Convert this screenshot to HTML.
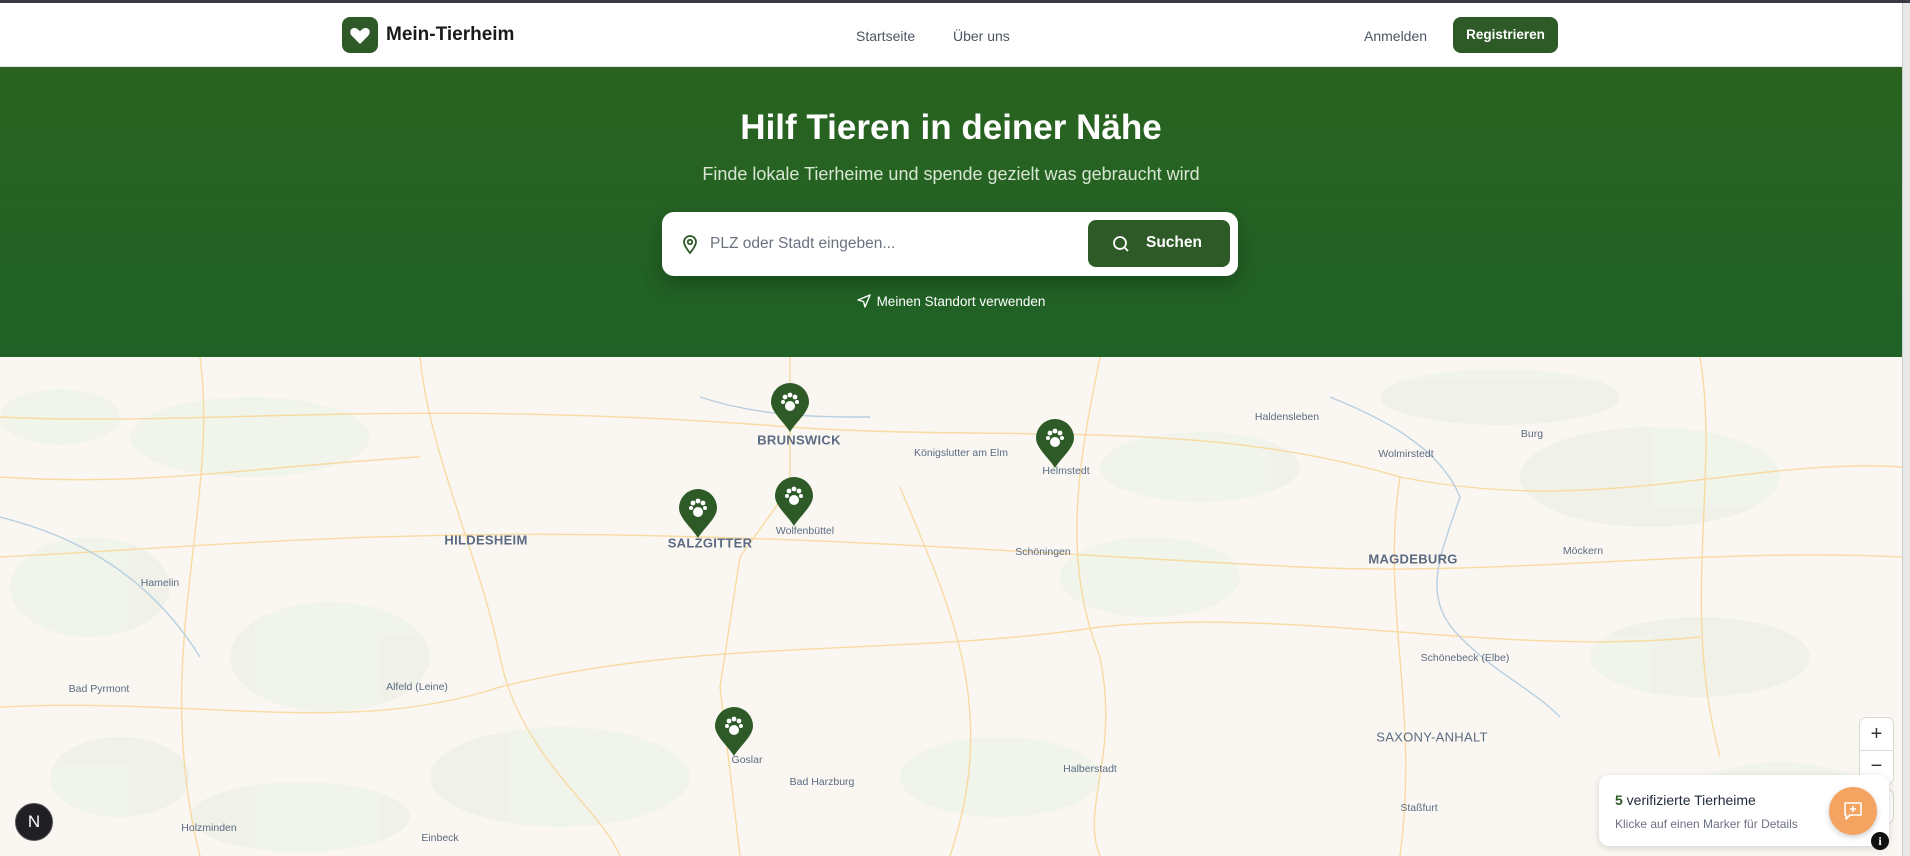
<!DOCTYPE html>
<html><head><meta charset="utf-8"><style>
*{margin:0;padding:0;box-sizing:border-box}
body{width:1910px;height:856px;overflow:hidden;font-family:"Liberation Sans","DejaVu Sans",sans-serif;background:#faf7f2;position:relative}
.topbar{position:absolute;left:0;top:0;width:1910px;height:3px;background:#3a3a44}
.header{position:absolute;left:0;top:3px;width:1902px;height:64px;background:#fff;border-bottom:1px solid #e5e7eb}
.logo{position:absolute;left:342px;top:14px;width:36px;height:36px;background:#2d5a27;border-radius:8px}
.brand{position:absolute;left:386px;top:21px;font-size:19px;font-weight:bold;color:#1a1a1a}
.nav{position:absolute;top:25px;font-size:14px;color:#4b5563}
.reg{position:absolute;left:1453px;top:14px;width:105px;height:36px;background:#2d5a27;border-radius:8px;color:#fff;font-size:13.5px;font-weight:bold;text-align:center;line-height:36px}
.hero{position:absolute;left:0;top:67px;width:1902px;height:290px;background:linear-gradient(180deg,#2a6320,#1f6126)}
.title{position:absolute;left:0;width:1902px;top:41px;text-align:center;color:#fff;font-size:35px;font-weight:bold}
.sub{position:absolute;left:0;width:1902px;top:97px;text-align:center;color:#d8e6d4;font-size:18px}
.search{position:absolute;left:662px;top:145px;width:576px;height:64px;background:#fff;border-radius:12px;box-shadow:0 8px 20px rgba(0,0,0,.25)}
.ph{position:absolute;left:48px;top:23px;color:#6b7280;font-size:15.5px}
.btn{position:absolute;left:426px;top:8px;width:142px;height:47px;background:#2d5a27;border-radius:8px;color:#fff;font-size:15.5px;font-weight:bold}
.loc{position:absolute;left:0;width:1902px;top:227px;text-align:center;color:#fff;font-size:13.5px}
.map{position:absolute;left:0;top:357px;width:1902px;height:499px;background:#faf7f2;overflow:hidden}
.scroll{position:absolute;left:1902px;top:3px;width:8px;height:853px;background:#e8e8e8;border-left:1px solid #ccc}
.lb{position:absolute;color:#5b6b82;font-size:10.5px;white-space:nowrap;transform:translate(-50%,-50%)}
.cap{font-weight:bold;font-size:13px;letter-spacing:.3px}
.mk{position:absolute;width:40px;height:50px}
.zoom{position:absolute;left:1860px;top:718px;width:33px;height:66px;background:#fff;border-radius:6px;box-shadow:0 0 0 1px rgba(0,0,0,.12);font-size:20px;text-align:center;color:#333}
.panel{position:absolute;left:1599px;top:775px;width:290px;height:71px;background:#fff;border-radius:10px;box-shadow:0 2px 8px rgba(0,0,0,.15)}
</style></head><body>
<div class="topbar"></div>
<div class="header">
 <div class="logo"><svg width="36" height="36" viewBox="0 0 36 36"><path d="M18 27 L10 19 C7 16 8 11 12.5 11 C15 11 17 13 18 14.5 C19 13 21 11 23.5 11 C28 11 29 16 26 19 Z" fill="#fff"/></svg></div>
 <div class="brand">Mein-Tierheim</div>
 <div class="nav" style="left:856px">Startseite</div>
 <div class="nav" style="left:953px">Über uns</div>
 <div class="nav" style="left:1364px;color:#4b5563">Anmelden</div>
 <div class="reg">Registrieren</div>
</div>
<div class="hero">
 <div class="title">Hilf Tieren in deiner Nähe</div>
 <div class="sub">Finde lokale Tierheime und spende gezielt was gebraucht wird</div>
 <div class="search">
  <svg style="position:absolute;left:20px;top:22px" width="16" height="20" viewBox="0 0 16 20"><path d="M8 19 C8 19 2 12 2 8 A6 6 0 0 1 14 8 C14 12 8 19 8 19Z" fill="none" stroke="#2d5a27" stroke-width="1.8"/><circle cx="8" cy="8" r="2.2" fill="none" stroke="#2d5a27" stroke-width="1.8"/></svg>
  <div class="ph">PLZ oder Stadt eingeben...</div>
  <div class="btn"><svg style="position:absolute;left:24px;top:15px" width="18" height="18" viewBox="0 0 18 18"><circle cx="8" cy="8" r="6" fill="none" stroke="#fff" stroke-width="1.8"/><path d="M12.5 12.5 L16 16" stroke="#fff" stroke-width="1.8"/></svg><span style="position:absolute;left:58px;top:14px">Suchen</span></div>
 </div>
 <div class="loc"><svg width="14" height="14" viewBox="0 0 14 14" style="vertical-align:-2px;margin-right:6px"><path d="M13 1 L1 6 L6.5 7.5 L8 13 Z" fill="none" stroke="#fff" stroke-width="1.4" stroke-linejoin="round"/></svg>Meinen Standort verwenden</div>
</div>
<div class="map">
<svg width="1902" height="499" style="position:absolute;left:0;top:0">
 <g fill="#eef2e7" opacity=".8">
  <ellipse cx="250" cy="80" rx="120" ry="40"/><ellipse cx="90" cy="230" rx="80" ry="50"/><ellipse cx="330" cy="300" rx="100" ry="55"/>
  <ellipse cx="1200" cy="110" rx="100" ry="35"/><ellipse cx="1150" cy="220" rx="90" ry="40"/><ellipse cx="1650" cy="120" rx="130" ry="50"/>
  <ellipse cx="1700" cy="300" rx="110" ry="40"/><ellipse cx="560" cy="420" rx="130" ry="50"/><ellipse cx="300" cy="460" rx="110" ry="35"/>
  <ellipse cx="1500" cy="40" rx="120" ry="28"/><ellipse cx="1000" cy="420" rx="100" ry="40"/><ellipse cx="1780" cy="440" rx="90" ry="35"/>
  <ellipse cx="120" cy="420" rx="70" ry="40"/><ellipse cx="60" cy="60" rx="60" ry="28"/>
 </g>
 <g fill="none" stroke="#f8d79a" stroke-width="1.4" opacity=".9">
  <path d="M0 60 C200 70 400 40 790 70 C1000 85 1200 60 1400 120 C1600 160 1750 100 1902 110"/>
  <path d="M790 0 L790 130 L740 200 L720 330 L740 499"/>
  <path d="M0 200 C200 190 400 170 700 180 C900 185 1100 200 1300 210 C1500 220 1700 190 1902 200"/>
  <path d="M420 0 C430 100 480 200 500 300 C520 400 600 450 620 499"/>
  <path d="M1100 0 C1080 100 1060 200 1100 300 C1120 400 1080 450 1100 499"/>
  <path d="M0 350 C200 340 350 380 500 330 C700 280 900 300 1100 270 C1300 250 1500 300 1700 280 1902 290"/>
  <path d="M200 0 C220 150 150 300 200 499"/>
  <path d="M1400 120 C1380 250 1420 350 1400 499"/>
  <path d="M1700 0 C1720 120 1680 250 1720 400 1700 499"/>
  <path d="M0 120 C150 130 250 110 420 100"/>
  <path d="M900 130 C950 250 1000 350 950 499"/>
 </g>
 <g fill="none" stroke="#b8cfe0" stroke-width="1.4">
  <path d="M1330 40 C1380 60 1440 90 1460 140 C1440 200 1420 240 1460 280 C1500 320 1530 330 1560 360"/>
  <path d="M0 160 C80 180 150 220 200 300"/>
  <path d="M700 40 C760 60 820 60 870 60"/>
 </g>
</svg>
<div class="lb cap" style="left:799px;top:83px">BRUNSWICK</div>
<div class="lb" style="left:961px;top:96px">Königslutter am Elm</div>
<div class="lb" style="left:1066px;top:114px">Helmstedt</div>
<div class="lb cap" style="left:486px;top:183px">HILDESHEIM</div>
<div class="lb cap" style="left:710px;top:186px">SALZGITTER</div>
<div class="lb" style="left:805px;top:174px">Wolfenbüttel</div>
<div class="lb" style="left:1043px;top:195px">Schöningen</div>
<div class="lb cap" style="left:1413px;top:202px">MAGDEBURG</div>
<div class="lb" style="left:160px;top:226px">Hamelin</div>
<div class="lb" style="left:1287px;top:60px">Haldensleben</div>
<div class="lb" style="left:1532px;top:77px">Burg</div>
<div class="lb" style="left:1406px;top:97px">Wolmirstedt</div>
<div class="lb" style="left:1583px;top:194px">Möckern</div>
<div class="lb" style="left:1465px;top:301px">Schönebeck (Elbe)</div>
<div class="lb" style="left:99px;top:332px">Bad Pyrmont</div>
<div class="lb" style="left:417px;top:330px">Alfeld (Leine)</div>
<div class="lb cap" style="left:1432px;top:380px;font-weight:normal;font-size:13px">SAXONY-ANHALT</div>
<div class="lb" style="left:747px;top:403px">Goslar</div>
<div class="lb" style="left:822px;top:425px">Bad Harzburg</div>
<div class="lb" style="left:1090px;top:412px">Halberstadt</div>
<div class="lb" style="left:1419px;top:451px">Staßfurt</div>
<div class="lb" style="left:209px;top:471px">Holzminden</div>
<div class="lb" style="left:440px;top:481px">Einbeck</div>
<svg width="0" height="0" style="position:absolute"><defs><g id="m"><path d="M20 50 C14 40 1 30 1 20 A19 19 0 0 1 39 20 C39 30 26 40 20 50Z" fill="#2d5a27"/><circle cx="20" cy="24" r="5" fill="#fff"/><circle cx="15" cy="15" r="2.4" fill="#fff"/><circle cx="20" cy="13" r="2.4" fill="#fff"/><circle cx="25" cy="15" r="2.4" fill="#fff"/><circle cx="13" cy="20" r="2" fill="#fff"/><circle cx="27" cy="20" r="2" fill="#fff"/></g></defs></svg>
<svg class="mk" style="left:770px;top:25px" viewBox="0 0 40 50"><use href="#m"/></svg>
<svg class="mk" style="left:1035px;top:61px" viewBox="0 0 40 50"><use href="#m"/></svg>
<svg class="mk" style="left:678px;top:131px" viewBox="0 0 40 50"><use href="#m"/></svg>
<svg class="mk" style="left:774px;top:119px" viewBox="0 0 40 50"><use href="#m"/></svg>
<svg class="mk" style="left:714px;top:349px" viewBox="0 0 40 50"><use href="#m"/></svg>
<div style="position:absolute;left:15px;top:446px;width:38px;height:38px;border-radius:50%;background:#1f1f24;border:1px solid #555;color:#fff;text-align:center;line-height:36px;font-size:17px">N</div>
</div>
<div class="zoom"><div style="height:33px;line-height:33px;border-bottom:1px solid #ddd">+</div><div style="height:33px;line-height:31px">−</div></div>
<div style="position:absolute;left:1860px;top:790px;width:33px;height:33px;background:#fff;border-radius:6px;box-shadow:0 0 0 1px rgba(0,0,0,.12)"></div>
<div class="panel">
 <div style="position:absolute;left:16px;top:17px;font-size:14px;color:#1f2937"><b style="color:#2d5a27">5</b> verifizierte Tierheime</div>
 <div style="position:absolute;left:16px;top:42px;font-size:12px;color:#6b7280">Klicke auf einen Marker für Details</div>
</div>
<div style="position:absolute;left:1829px;top:787px;width:48px;height:48px;border-radius:50%;background:#f4a460;box-shadow:0 2px 6px rgba(0,0,0,.2)"><svg style="position:absolute;left:14px;top:14px" width="20" height="20" viewBox="0 0 20 20"><path d="M2 2 H18 V14 H7 L3 18 V14 H2 Z" fill="none" stroke="#fff" stroke-width="1.6" stroke-linejoin="round"/><path d="M10 5 V11 M7 8 H13" stroke="#fff" stroke-width="1.6"/></svg></div>
<div style="position:absolute;left:1871px;top:832px;width:18px;height:18px;border-radius:50%;background:#111;color:#fff;font-size:12px;font-weight:bold;text-align:center;line-height:18px;font-family:'Liberation Serif',serif">i</div>
<div class="scroll"></div>
</body></html>
